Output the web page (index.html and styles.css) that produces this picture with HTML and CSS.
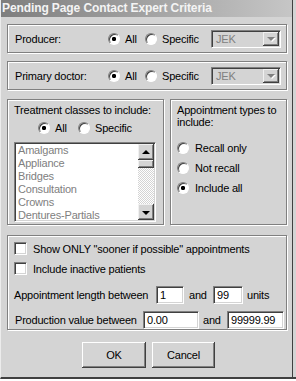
FILE: index.html
```html
<!DOCTYPE html>
<html>
<head>
<meta charset="utf-8">
<link rel="stylesheet" href="styles.css">
</head>
<body>
<div class="dialog">
  <div class="title">Pending Page Contact Expert Criteria</div>
  <div class="content">
    <div class="group row">
      <span class="lbl">Producer:</span>
      <span class="opt first"><i class="radio on"></i>All</span>
      <span class="opt"><i class="radio"></i>Specific</span>
      <span class="combo"><span class="val">JEK</span><span class="drop"><i class="arrow"></i></span></span>
    </div>
    <div class="group row second">
      <span class="lbl">Primary doctor:</span>
      <span class="opt first"><i class="radio on"></i>All</span>
      <span class="opt"><i class="radio"></i>Specific</span>
      <span class="combo"><span class="val">JEK</span><span class="drop"><i class="arrow"></i></span></span>
    </div>
    <div class="cols">
      <div class="group treat">
        <div class="head">Treatment classes to include:</div>
        <div class="tradios">
          <span class="opt tfirst"><i class="radio on"></i>All</span>
          <span class="opt"><i class="radio"></i>Specific</span>
        </div>
        <div class="listbox">
          <div class="items">
            <div>Amalgams</div>
            <div>Appliance</div>
            <div>Bridges</div>
            <div>Consultation</div>
            <div>Crowns</div>
            <div>Dentures-Partials</div>
          </div>
          <div class="scroll">
            <span class="sbtn"><i class="uarrow"></i></span>
            <span class="thumb"></span>
            <span class="track"></span>
            <span class="sbtn"><i class="darrow"></i></span>
          </div>
        </div>
      </div>
      <div class="group appt">
        <div class="head">Appointment types to include:</div>
        <div class="aradios">
          <span class="opt"><i class="radio"></i>Recall only</span>
          <span class="opt"><i class="radio"></i>Not recall</span>
          <span class="opt"><i class="radio on"></i>Include all</span>
        </div>
      </div>
    </div>
    <div class="group bottom">
      <div class="chk"><i class="box"></i>Show ONLY "sooner if possible" appointments</div>
      <div class="chk second"><i class="box"></i>Include inactive patients</div>
      <div class="line len">
        <span class="ltext w1">Appointment length between</span>
        <span class="input i1">1</span>
        <span class="and a1">and</span>
        <span class="input i2">99</span>
        <span class="units">units</span>
      </div>
      <div class="line prod">
        <span class="ltext w2">Production value between</span>
        <span class="input i3">0.00</span>
        <span class="and a2">and</span>
        <span class="input i4">99999.99</span>
      </div>
    </div>
    <div class="buttons">
      <span class="btn ok">OK</span>
      <span class="btn cancel">Cancel</span>
    </div>
  </div>
</div>
</body>
</html>
```
FILE: styles.css
```css
html, body {
  margin: 0;
  padding: 0;
  background: #fff;
}
body {
  font-family: "Liberation Sans", Arial, sans-serif;
  font-size: 11px;
  color: #000;
}
.dialog {
  width: 296px;
  height: 379px;
  box-sizing: border-box;
  background: #d4d4d4;
  border-left: 1px solid #ececec;
  border-bottom: 2px solid #404040;
  box-shadow: inset -3px 0 0 #d4d4d4, inset -4px 0 0 #404040;
  overflow: hidden;
}
.title {
  height: 17px;
  line-height: 16px;
  margin-right: 4px;
  padding-left: 1px;
  color: #f4f4f4;
  font-weight: bold;
  font-size: 12px;
  letter-spacing: -0.1px;
  background: linear-gradient(90deg, #7e7e7e, #c6c6c6);
  white-space: nowrap;
}
.content {
  padding: 7px 0 0 6px;
  width: 280px;
  letter-spacing: -0.2px;
}
.group {
  border: 1px solid #808080;
  box-shadow: inset 1px 1px 0 #fff, 1px 1px 0 #fff;
  box-sizing: border-box;
}
.row {
  height: 29px;
  display: flex;
  align-items: center;
  padding: 0 5px 0 7px;
}
.row.second { margin-top: 8px; }
.lbl { width: 93px; }
.opt {
  display: flex;
  align-items: center;
  gap: 5px;
  white-space: nowrap;
}
.opt.first { width: 37px; }
.radio {
  display: inline-block;
  width: 12px;
  height: 12px;
  box-sizing: border-box;
  border-radius: 50%;
  border: 1px solid;
  border-color: #808080 #fff #fff #808080;
  background: #fff;
  box-shadow: inset 1px 1px 0 #404040;
  flex: none;
}
.radio.on {
  background: radial-gradient(circle at 5px 5px, #000 0 1.9px, #fff 2.4px);
}
.combo {
  margin-left: auto;
  width: 70px;
  height: 18px;
  box-sizing: border-box;
  border: 1px solid;
  border-color: #808080 #fff #fff #808080;
  box-shadow: inset 1px 1px 0 #404040, inset -1px -1px 0 #d4d4d4;
  display: flex;
  align-items: center;
  padding: 1px;
  color: #808080;
}
.combo .val {
  flex: 1;
  padding-left: 3px;
}
.drop {
  width: 16px;
  height: 14px;
  box-sizing: border-box;
  background: #d4d4d4;
  box-shadow: inset -1px -1px 0 #404040, inset 1px 1px 0 #f0f0f0, inset -2px -2px 0 #808080;
  display: flex;
  align-items: center;
  justify-content: center;
}
.arrow {
  width: 0;
  height: 0;
  border-left: 4px solid transparent;
  border-right: 4px solid transparent;
  border-top: 4px solid #808080;
  margin-top: 1px;
  filter: drop-shadow(1px 1px 0 #fff);
}
.cols {
  display: flex;
  margin-top: 9px;
  height: 126px;
  gap: 6px;
}
.treat {
  width: 157px;
  padding: 4px 0 0 6px;
}
.head { line-height: 12px; }
.tradios {
  display: flex;
  margin: 5px 0 0 24px;
  height: 14px;
  align-items: center;
}
.opt.tfirst { width: 40px; }
.listbox {
  margin-top: 7px;
  width: 142px;
  height: 80px;
  box-sizing: border-box;
  border: 1px solid;
  border-color: #808080 #fff #fff #808080;
  box-shadow: inset 1px 1px 0 #404040, inset -1px -1px 0 #d4d4d4;
  padding: 1px;
  display: flex;
  background: #fff;
}
.items {
  flex: 1;
  padding-left: 2px;
  color: #808080;
  line-height: 13px;
  overflow: hidden;
  background: #fff;
}
.scroll {
  width: 16px;
  display: flex;
  flex-direction: column;
}
.sbtn, .thumb {
  height: 16px;
  flex: none;
  box-sizing: border-box;
  background: #d4d4d4;
  box-shadow: inset -1px -1px 0 #404040, inset 1px 1px 0 #f0f0f0, inset -2px -2px 0 #808080;
  display: flex;
  align-items: center;
  justify-content: center;
}
.thumb { height: 8px; }
.track {
  flex: 1;
  background: repeating-conic-gradient(#fff 0 25%, #d4d4d4 0 50%) 0 0 / 2px 2px;
}
.uarrow, .darrow {
  width: 0;
  height: 0;
  border-left: 4px solid transparent;
  border-right: 4px solid transparent;
}
.uarrow { border-bottom: 4px solid #000; margin-top: -1px; }
.darrow { border-top: 4px solid #000; margin-top: 1px; }
.appt {
  width: 117px;
  padding: 4px 0 0 6px;
}
.aradios {
  margin-top: 13px;
  display: flex;
  flex-direction: column;
  gap: 6px;
}
.aradios .opt { height: 14px; gap: 6px; }
.bottom {
  margin-top: 10px;
  height: 95px;
  padding: 6px 0 0 6px;
}
.chk {
  display: flex;
  align-items: center;
  gap: 6px;
  height: 13px;
  white-space: nowrap;
}
.chk.second { margin-top: 7px; }
.box {
  display: inline-block;
  width: 13px;
  height: 13px;
  box-sizing: border-box;
  border: 1px solid;
  border-color: #808080 #fff #fff #808080;
  box-shadow: inset 1px 1px 0 #404040, inset -1px -1px 0 #d4d4d4;
  background: #fff;
  flex: none;
}
.line {
  display: flex;
  align-items: center;
  height: 18px;
  white-space: nowrap;
}
.line.len { margin-top: 11px; }
.line.prod { margin-top: 7px; padding-left: 1px; }
.w1 { width: 142px; }
.w2 { width: 128px; }
.input {
  height: 18px;
  box-sizing: border-box;
  border: 1px solid;
  border-color: #808080 #fff #fff #808080;
  box-shadow: inset 1px 1px 0 #404040, inset -1px -1px 0 #d4d4d4;
  background: #fff;
  padding: 0 0 0 3px;
  line-height: 16px;
}
.i1 { width: 28px; }
.i2 { width: 30px; }
.i3 { width: 56px; }
.i4 { width: 57px; }
.and { box-sizing: border-box; }
.a1 { width: 29px; padding-left: 5px; }
.a2 { width: 28px; padding-left: 4px; }
.units { margin-left: 4px; }
.buttons {
  display: flex;
  margin-top: 12px;
  padding-left: 75px;
  gap: 6px;
}
.btn {
  height: 26px;
  box-sizing: border-box;
  background: #d4d4d4;
  box-shadow: inset -1px -1px 0 #404040, inset 1px 1px 0 #fff, inset -2px -2px 0 #808080;
  display: flex;
  align-items: center;
  justify-content: center;
}
.ok { width: 64px; }
.cancel { width: 63px; }
```
